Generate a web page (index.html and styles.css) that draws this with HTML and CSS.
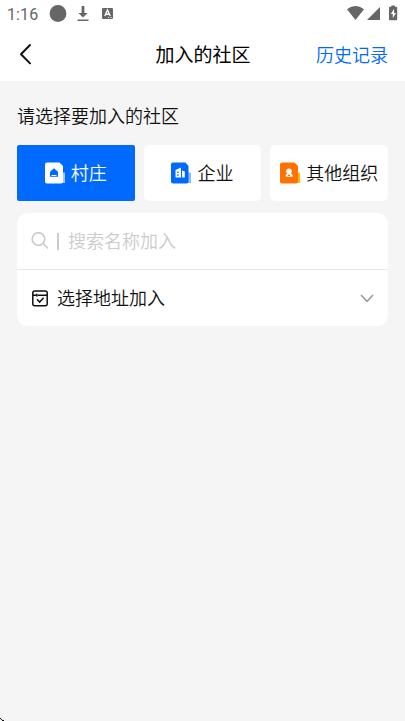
FILE: index.html
```html
<!DOCTYPE html>
<html lang="zh-CN">
<head>
<meta charset="utf-8">
<meta name="viewport" content="width=device-width, initial-scale=1">
<title>加入的社区</title>
<link rel="stylesheet" href="styles.css">
</head>
<body>
<header class="top">
  <div class="status">
    <span class="time">1:16</span>
    <svg class="status-left" width="66" height="20" viewBox="0 0 66 20" fill="#666">
      <circle cx="10" cy="9.500" r="8.400"/>
      <path d="M33.600 2h2.800v7h3.200L35 13.500 30.400 9h3.200zM29.500 15.600h11v1.400h-11z"/>
      <rect x="54" y="4" width="11" height="11" rx="1.200"/>
      <path d="M56.800 12l2.700-6 2.700 6M57.800 10.200h3.400" fill="none" stroke="#fff" stroke-width="1.400"/>
      <path d="M60 13h1v1h-1zM62.500 13h1v1h-1z" fill="#fff"/>
    </svg>
    <svg class="status-right" width="51" height="20" viewBox="0 0 51 20" fill="#666">
      <path d="M0 5.300Q8.500-1.500 17 5.300L8.500 16z"/>
      <path d="M33 3v13H20z"/>
      <path d="M44.300 2.800V1.500h3.600v1.300h1.400q.9 0 .9.900v11.600q0 .9-.9.900h-6.400q-.9 0-.9-.9V3.700q0-.9.900-.9z"/>
      <path d="M47 5l-3.200 5h2v4l3.200-5h-2z" fill="#fff"/>
    </svg>
  </div>
  <nav class="nav">
    <svg class="back" width="14" height="24" viewBox="0 0 14 24" fill="none" stroke="#111" stroke-width="2" stroke-linecap="round" stroke-linejoin="round"><path d="M12 3L3 12.200l9 9.200"/></svg>
    <h1 class="title">加入的社区</h1>
    <a class="history">历史记录</a>
  </nav>
</header>
<main class="content">
  <p class="prompt">请选择要加入的社区</p>
  <div class="tabs">
    <button class="tab active">
      <svg width="20" height="22" viewBox="0 0 20 22"><path d="M16 10.500h4V21h-4z" fill="#9cc5ff"/><path d="M2 .5h12.500L18 4v15.500a2 2 0 0 1-2 2H2a2 2 0 0 1-2-2v-17a2 2 0 0 1 2-2z" fill="#fff"/><path d="M9 6.300l4 3.500v5H5v-5z" fill="#006aff"/><path d="M6.500 13.500h5" stroke="#fff"/></svg>
      <span>村庄</span>
    </button>
    <button class="tab">
      <svg width="20" height="22" viewBox="0 0 20 22"><path d="M16 10.500h4V21h-4z" fill="#8abaff"/><path d="M2 .5h12.500L17.500 4v15.500a2 2 0 0 1-2 2H2a2 2 0 0 1-2-2v-17a2 2 0 0 1 2-2z" fill="#006aff"/><path d="M4.500 8L10 5.500V15.500H4.500zM11 8.500l2.800 1v6H11z" fill="#fff"/><path d="M6.200 9.500h1.400V11H6.200zM6.200 12.300h1.400v1.400H6.200z" fill="#006aff"/></svg>
      <span>企业</span>
    </button>
    <button class="tab">
      <svg width="20" height="22" viewBox="0 0 20 22"><path d="M16 10.500h4V21h-4z" fill="#ffb700"/><path d="M2 .5h12.500L18 4v15.500a2 2 0 0 1-2 2H2a2 2 0 0 1-2-2v-17a2 2 0 0 1 2-2z" fill="#ff7200"/><circle cx="9" cy="9.300" r="2.800" fill="#fff"/><path d="M7.700 11h2.600l2.400 2v1.800H5.700V13z" fill="#fff"/><path d="M9 12l1.500 2h-3z" fill="#ff7200"/></svg>
      <span>其他组织</span>
    </button>
  </div>
  <section class="card">
    <div class="row search">
      <svg class="glass" width="18" height="18" viewBox="0 0 18 18" fill="none" stroke="#ccc" stroke-width="1.700" stroke-linecap="round"><circle cx="7.500" cy="7" r="6.300"/><path d="M12.200 11.700L16.600 16"/></svg>
      <i class="bar"></i>
      <span class="placeholder">搜索名称加入</span>
    </div>
    <div class="row address">
      <svg width="16" height="17" viewBox="0 0 16 17" fill="none" stroke="#111" stroke-width="1.500"><rect x=".8" y="1" width="14.400" height="14.800" rx="2"/><path d="M1 5.300h3M5.800 5.300H15M4.800 3.800v2.600"/><path d="M5 9.300l2.600 2.800 4-4.300"/></svg>
      <span class="label">选择地址加入</span>
      <svg width="14" height="9" viewBox="0 0 14 9" fill="none" stroke="#999" stroke-width="1.500"><path d="M1 1l6 6.300L13 1"/></svg>
    </div>
  </section>
</main>
<svg class="corner" width="4" height="4" viewBox="0 0 4 4"><path d="M0 1h1v1H0zM1 2h1v1H1zM2 3h2v1H2z" fill="#111"/></svg>
</body>
</html>
```
FILE: styles.css
```css
* { box-sizing: border-box; }
body {
  margin: 0;
  min-height: 721px;
  background: #f5f5f5;
  color: #111;
  font: 350 18px/26px "Noto Sans CJK SC", sans-serif;
}
svg { display: block; flex: none; }
.top { height: 81px; background: #fff; }
.status {
  height: 28px;
  padding: 4px 7px 0;
  display: flex;
  align-items: flex-start;
}
.time {
  width: 41px;
  padding-top: 1px;
  font: 16px/20px Roboto, sans-serif;
  letter-spacing: .1px;
  color: #666;
}
.status-right { margin-left: auto; }
.nav {
  height: 51px;
  padding: 0 17px 0 18px;
  display: grid;
  grid-template-columns: 1fr auto 1fr;
  align-items: center;
}
.title { margin: 0; font-size: 19px; line-height: 28px; font-weight: 400; color: #000; }
.history { justify-self: end; color: #006aff; }
.content { padding: 21px 17px 0; }
.prompt { margin: 0 0 17px; }
.tabs { display: grid; grid-template-columns: repeat(3, 1fr); gap: 9px; }
.tab {
  height: 56px;
  padding: 0;
  border: 0;
  border-radius: 5px;
  background: #fff;
  color: #111;
  font: inherit;
  display: flex;
  align-items: center;
  justify-content: center;
  gap: 6px;
}
.tab span { padding-bottom: 2px; }
.active { border-radius: 2px; background: #006aff; color: #fff; }
.card { margin-top: 12px; border-radius: 11px; background: #fff; }
.row { height: 56px; padding: 0 14px; display: flex; align-items: center; }
.search { height: 57px; border-bottom: 1px solid #e8e8e8; }
.bar { width: 2px; height: 17px; margin: 0 9px 0 8px; background: #ccc; }
.placeholder { padding-bottom: 2px; color: #ccc; }
.address { padding-left: 15px; }
.label { flex: 1; margin-left: 9px; padding-bottom: 2px; }
.corner { position: absolute; left: 0; bottom: 0; }
```
